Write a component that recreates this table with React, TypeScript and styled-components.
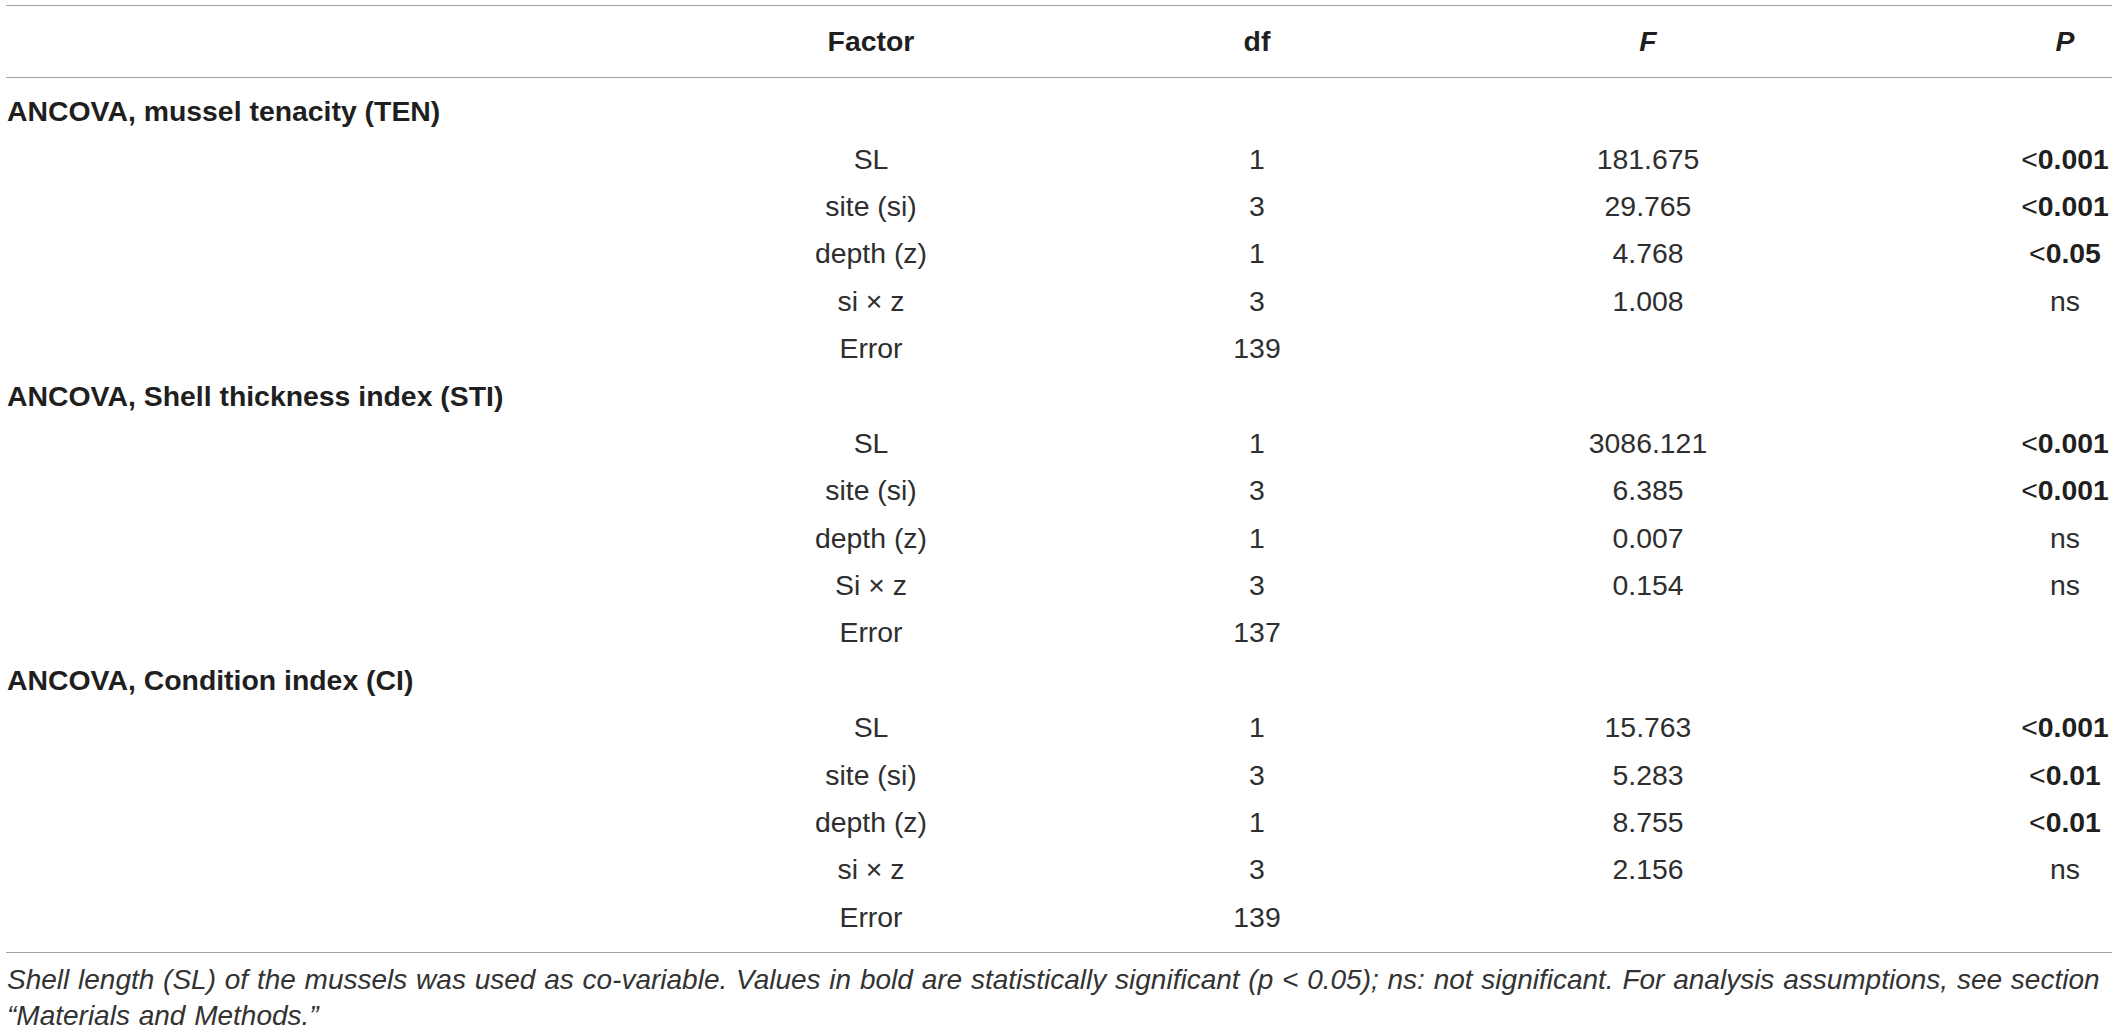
import React from "react";
import styled, { createGlobalStyle } from "styled-components";

const GlobalStyle = createGlobalStyle`
  html, body {
    margin: 0;
    padding: 0;
    background: #ffffff;
  }
  body {
    font-family: "Liberation Sans", Arial, Helvetica, sans-serif;
    color: #2e2e2e;
  }
`;

const COLS = "579px 572px 200px 582px 173px";
const RULE = "#a2a2a2";

const Table = styled.div`
  margin: 5px 0 0 6px;
  width: 2106px;
`;

const HeadRow = styled.div`
  display: grid;
  grid-template-columns: ${COLS};
  align-items: center;
  height: 71px;
  border-top: 1px solid ${RULE};
  border-bottom: 1px solid ${RULE};
  font-size: 28.4px;
  font-weight: 700;
  color: #1f1f1f;
`;

const Body = styled.div`
  padding: 10px 0 10.8px;
`;

const Row = styled.div`
  display: grid;
  grid-template-columns: ${COLS};
  align-items: center;
  height: 47.4px;
  font-size: 28.4px;
`;

const SectionLabel = styled.div`
  grid-column: 1 / -1;
  padding-left: 1px;
  font-weight: 700;
  color: #1f1f1f;
  white-space: nowrap;
`;

const Cell = styled.div<{ $italic?: boolean; $last?: boolean }>`
  text-align: center;
  white-space: nowrap;
  font-style: ${(p) => (p.$italic ? "italic" : "normal")};
  padding-left: ${(p) => (p.$last ? "79px" : "0")};
`;

const Sig = styled.span`
  font-weight: 700;
  color: #1f1f1f;
`;

const Lt = styled.span`
  font-weight: 400;
`;

const Note = styled.p`
  margin: 0;
  border-top: 1px solid ${RULE};
  padding: 9px 0 0 1px;
  font-style: italic;
  font-size: 28px;
  line-height: 36px;
  word-spacing: 1px;
  color: #333333;
`;

type DataRow = [string, string, string, string];

const sections: { title: string; rows: DataRow[] }[] = [
  {
    title: "ANCOVA, mussel tenacity (TEN)",
    rows: [
      ["SL", "1", "181.675", "<0.001"],
      ["site (si)", "3", "29.765", "<0.001"],
      ["depth (z)", "1", "4.768", "<0.05"],
      ["si × z", "3", "1.008", "ns"],
      ["Error", "139", "", ""],
    ],
  },
  {
    title: "ANCOVA, Shell thickness index (STI)",
    rows: [
      ["SL", "1", "3086.121", "<0.001"],
      ["site (si)", "3", "6.385", "<0.001"],
      ["depth (z)", "1", "0.007", "ns"],
      ["Si × z", "3", "0.154", "ns"],
      ["Error", "137", "", ""],
    ],
  },
  {
    title: "ANCOVA, Condition index (CI)",
    rows: [
      ["SL", "1", "15.763", "<0.001"],
      ["site (si)", "3", "5.283", "<0.01"],
      ["depth (z)", "1", "8.755", "<0.01"],
      ["si × z", "3", "2.156", "ns"],
      ["Error", "139", "", ""],
    ],
  },
];

function PValue({ value }: { value: string }) {
  if (value.startsWith("<")) {
    return (
      <Sig>
        <Lt>&lt;</Lt>
        {value.slice(1)}
      </Sig>
    );
  }
  return <>{value}</>;
}

export default function App() {
  return (
    <>
      <GlobalStyle />
      <Table>
        <HeadRow>
          <Cell />
          <Cell>Factor</Cell>
          <Cell>df</Cell>
          <Cell $italic>F</Cell>
          <Cell $italic $last>
            P
          </Cell>
        </HeadRow>
        <Body>
          {sections.map((s) => (
            <React.Fragment key={s.title}>
              <Row>
                <SectionLabel>{s.title}</SectionLabel>
              </Row>
              {s.rows.map((r, i) => (
                <Row key={s.title + i}>
                  <Cell />
                  <Cell>{r[0]}</Cell>
                  <Cell>{r[1]}</Cell>
                  <Cell>{r[2]}</Cell>
                  <Cell $last>
                    <PValue value={r[3]} />
                  </Cell>
                </Row>
              ))}
            </React.Fragment>
          ))}
        </Body>
        <Note>
          Shell length (SL) of the mussels was used as co-variable. Values in bold are
          statistically significant (p &lt; 0.05); ns: not significant. For analysis
          assumptions, see section “Materials and Methods.”
        </Note>
      </Table>
    </>
  );
}
